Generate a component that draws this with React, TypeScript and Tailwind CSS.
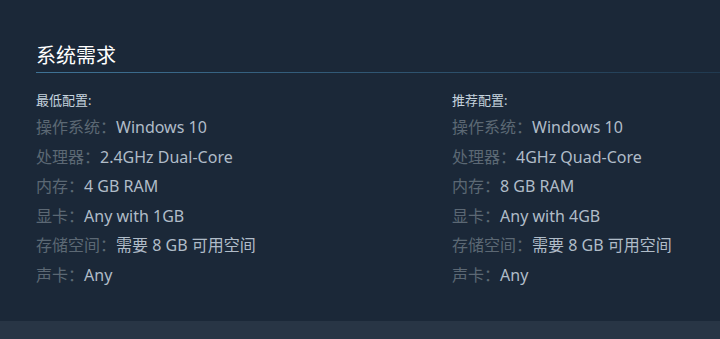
import React from 'react';

type Req = { label: string; value: string };

const minimum: Req[] = [
  { label: '操作系统：', value: 'Windows 10' },
  { label: '处理器：', value: '2.4GHz Dual-Core' },
  { label: '内存：', value: '4 GB RAM' },
  { label: '显卡：', value: 'Any with 1GB' },
  { label: '存储空间：', value: '需要 8 GB 可用空间' },
  { label: '声卡：', value: 'Any' },
];

const recommended: Req[] = [
  { label: '操作系统：', value: 'Windows 10' },
  { label: '处理器：', value: '4GHz Quad-Core' },
  { label: '内存：', value: '8 GB RAM' },
  { label: '显卡：', value: 'Any with 4GB' },
  { label: '存储空间：', value: '需要 8 GB 可用空间' },
  { label: '声卡：', value: 'Any' },
];

const font = { fontFamily: '"Noto Sans", "Noto Sans CJK SC", sans-serif' };

const ReqColumn = ({ title, items }: { title: string; items: Req[] }) => (
  <div>
    <div className="text-[13px] leading-[20px] text-[#c6d4df]">{title}</div>
    <ul className="mt-[3px]">
      {items.map((it) => (
        <li key={it.label} className="text-[16px] leading-[29.6px] whitespace-nowrap">
          <span className="text-[#5c6874]">{it.label}</span>
          <span className="text-[#b0bcc8]">{it.value}</span>
        </li>
      ))}
    </ul>
  </div>
);

export default function App() {
  return (
    <div className="w-[720px] h-[339px] bg-[#1b2838] flex flex-col overflow-hidden" style={font}>
      <div className="flex-1 pl-[36px] pt-[41px]">
        <h2 className="text-[20px] leading-[30px] text-white font-normal">系统需求</h2>
        <div className="h-px mt-[1px] bg-gradient-to-r from-[#3f7396] to-[#213a50]" />
        <div className="grid grid-cols-[416px_1fr] mt-[17px]">
          <ReqColumn title="最低配置:" items={minimum} />
          <ReqColumn title="推荐配置:" items={recommended} />
        </div>
      </div>
      <div className="h-[18px] bg-[#283545]" />
    </div>
  );
}
